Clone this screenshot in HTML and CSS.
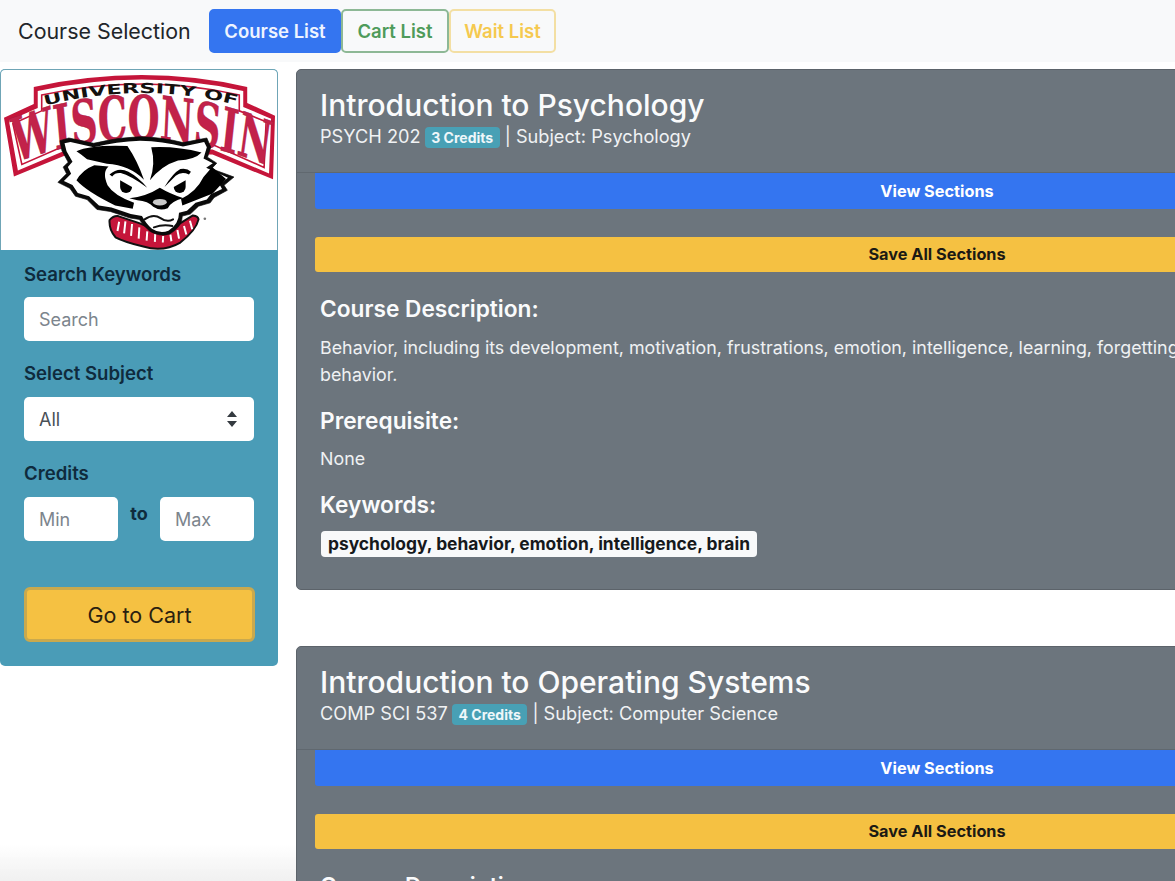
FILE: index.html
```html
<!DOCTYPE html>
<html lang="en">
<head>
<meta charset="utf-8">
<title>Course Selection</title>
<link rel="stylesheet" href="styles.css">
</head>
<body>
<nav class="navbar">
  <span class="brand">Course Selection</span>
  <div class="tabs">
    <button class="tab tab-blue">Course List</button>
    <button class="tab tab-green">Cart List</button>
    <button class="tab tab-yellow">Wait List</button>
  </div>
</nav>
<main class="layout">
  <aside class="sidebar">
    <svg class="logo" viewBox="0 -1 278 181" width="278" height="181" role="img" aria-label="University of Wisconsin logo">
      <path class="b-red" d="M3,47 L33,33 L33,16 Q143,-8 248,16 L248,32 L276,45 L274,109 L213,84 L67,84 L13,106 Z"/>
      <path class="b-white" d="M8,50 L37,37 L37,20 Q143,-3 244,20 L244,36 L272,48 L270,103 L213,79 L67,79 L17,100 Z"/>
      <path class="b-line" d="M12,53 L41,40 L41,24 Q143,2 240,24 L240,40 L267,51 L265,97 L213,74 L67,74 L21,94 Z"/>
      <path id="arcTop" class="guide" d="M44,35 Q143,9 240,35"/>
      <text class="univ"><textPath href="#arcTop" textLength="196" lengthAdjust="spacingAndGlyphs">UNIVERSITY OF</textPath></text>
      <g transform="scale(1,1.62)">
        <path id="arcWis" class="guide" d="M14,57 Q142,27 269,59"/>
        <text class="wis"><textPath href="#arcWis" textLength="258" lengthAdjust="spacingAndGlyphs">WISCONSIN</textPath></text>
      </g>
      <g transform="translate(50,60) scale(.3333)">
        <path class="scarf" d="M178,270 Q190,256 204,258 L270,280 L340,312 L430,256 Q446,258 447,268 Q440,300 392,338 Q340,368 280,350 Q220,335 196,322 Q176,300 178,270 Z"/>
        <path class="scarf-st" d="M207,275 L202,303 M226,274 L222,310 M246,282 L243,318 M268,292 L266,326 M292,304 L290,332 M316,312 L315,336 M340,318 L339,338 M362,314 L365,334 M383,300 L388,326 M403,288 L410,314 M421,272 L428,298"/>
        <path class="head-k" d="M28,30 L55,22 L130,38 Q200,20 270,18 Q340,20 400,36 L472,22 L484,50 L474,80 L502,98 L486,115 L554,140 L524,165 L534,180 L494,202 L482,218 L447,228 L422,252 L398,258 Q398,290 360,312 Q330,322 300,304 Q282,290 268,268 L240,264 L180,244 L140,238 L110,208 L75,198 L58,174 L22,156 L48,130 L38,110 L53,95 L34,60 Z"/>
        <path class="head-w" d="M42,38 L60,34 L130,50 Q200,32 270,30 Q340,32 400,48 L464,34 L472,50 L462,84 L490,98 L470,112 L536,142 L510,162 L518,176 L484,192 L472,208 L438,218 L412,242 L388,248 Q388,282 356,302 Q330,312 306,296 Q290,284 276,258 L242,252 L184,232 L146,226 L116,198 L82,188 L66,164 L40,152 L62,130 L52,110 L66,94 L48,62 Z"/>
        <path d="M78,62 Q120,42 232,46 Q262,90 282,148 Q240,105 170,100 L110,86 Q90,70 78,62 Z"/>
        <path d="M304,50 Q380,46 456,66 Q436,88 385,90 Q335,105 300,150 Q318,100 304,50 Z"/>
        <path d="M132,104 Q95,118 78,150 Q110,185 195,226 L248,236 L252,218 Q190,195 172,165 Q155,125 175,108 Z"/>
        <path d="M488,110 L530,146 L490,190 L398,226 L394,206 Q440,185 462,140 Z"/>
        <path d="M178,132 Q205,108 235,124 Q265,140 292,172 Q240,135 212,128 Q195,126 186,138 Z"/>
        <path d="M344,170 Q370,128 392,116 Q412,112 424,124 L418,132 Q395,122 378,136 Z"/>
        <path d="M210,150 L246,170 A18,18 0 0 1 210,170 Z"/>
        <path d="M408,150 L372,170 A18,18 0 0 0 408,170 Z"/>
        <path d="M238,204 Q290,198 330,172 Q360,190 402,204 Q365,212 354,234 Q330,244 310,230 Q295,212 262,210 Z"/>
        <ellipse class="nostril" cx="330" cy="216" rx="21" ry="10"/>
        <path class="mouth" d="M284,268 Q310,250 332,264 Q352,278 370,268 M312,292 Q340,282 368,288"/>
        <circle class="dot" cx="466" cy="266" r="4"/>
      </g>
    </svg>
    <form class="filters">
      <label class="field-label" for="search">Search Keywords</label>
      <input class="control" id="search" type="text" placeholder="Search">
      <label class="field-label gap-label" for="subject">Select Subject</label>
      <div class="select-box" id="subject">
        <span>All</span>
        <svg class="updown" viewBox="0 0 10 16" width="10" height="16" aria-hidden="true"><path d="M5,0 L10,6 L0,6 Z M0,10 L10,10 L5,16 Z"/></svg>
      </div>
      <label class="field-label gap-label" for="min">Credits</label>
      <div class="range">
        <input class="control" id="min" type="text" placeholder="Min">
        <b class="to">to</b>
        <input class="control" id="max" type="text" placeholder="Max">
      </div>
      <button class="cart-btn" type="button">Go to Cart</button>
    </form>
  </aside>
  <section class="courses">
    <article class="card">
      <header class="card-head">
        <h1>Introduction to Psychology</h1>
        <p class="sub">PSYCH 202 <span class="credits">3 Credits</span> | Subject: Psychology</p>
      </header>
      <div class="card-body">
        <button class="wide wide-blue">View Sections</button>
        <button class="wide wide-yellow">Save All Sections</button>
        <h2 class="first">Course Description:</h2>
        <p class="text">Behavior, including its development, motivation, frustrations, emotion, intelligence, learning, forgetting, personality, language, thinking, and social<br>behavior.</p>
        <h2>Prerequisite:</h2>
        <p class="text">None</p>
        <h2>Keywords:</h2>
        <span class="keywords">psychology, behavior, emotion, intelligence, brain</span>
      </div>
    </article>
    <article class="card">
      <header class="card-head">
        <h1>Introduction to Operating Systems</h1>
        <p class="sub">COMP SCI 537 <span class="credits">4 Credits</span> | Subject: Computer Science</p>
      </header>
      <div class="card-body">
        <button class="wide wide-blue">View Sections</button>
        <button class="wide wide-yellow">Save All Sections</button>
        <h2 class="first">Course Description:</h2>
        <p class="text">Input-output hardware, interrupt handling, properties of magnetic tapes, discs and drums, associative memories and virtual address translation techniques.</p>
      </div>
    </article>
  </section>
</main>
<div class="fade"></div>
</body>
</html>
```
FILE: styles.css
```css
* { box-sizing: border-box; }
html, body { height: 881px; overflow: hidden; }
body {
  margin: 0;
  background: #fff;
  color: #212529;
  font-family: Inter, "Noto Sans", sans-serif;
  width: 1175px;
}
button, input { font-family: inherit; }

.navbar {
  display: flex;
  align-items: center;
  height: 62px;
  padding: 0 0 0 18px;
  background: #f8f9fa;
}
.brand { font-size: 21.4px; width: 191px; white-space: nowrap; }
.tabs { display: flex; }
.tab {
  height: 44px;
  padding: 0;
  background: transparent;
  border: 2px solid;
  border-radius: 5px;
  font-size: 18.5px;
  font-weight: 600;
}
.tab-blue { width: 132px; background: #3475f0; border-color: #3475f0; color: #eef4ff; }
.tab-green { width: 108px; border-color: #8db895; color: #4f9b5a; }
.tab-yellow { width: 107px; border-color: #f3dfa3; color: #f5c94f; }

.layout {
  display: grid;
  grid-template-columns: 278px 1282px;
  column-gap: 18px;
  padding-top: 7px;
  align-items: start;
}
.sidebar {
  background: #4a9cb7;
  border-radius: 5px;
  overflow: hidden;
  height: 597px;
}
.logo { display: block; background: #fff; border: 1px solid #6fa5b6; border-bottom: 0; border-radius: 5px 5px 0 0; }
.b-red { fill: #c5153a; }
.b-white { fill: #fff; }
.b-line { fill: #fff; stroke: #c5153a; stroke-width: 1.6; }
.guide { fill: none; }
.univ { font: 700 14px "DejaVu Sans", sans-serif; fill: #14110f; }
.wis { font: 700 38px "DejaVu Serif", serif; fill: #c2224a; stroke: #a8183c; stroke-width: .3; }
.scarf { fill: #c5153a; stroke: #111; stroke-width: 6; stroke-linejoin: round; }
.scarf-st { fill: none; stroke: #fff; stroke-width: 6; }
.head-k { fill: #0a0a0a; stroke: #0a0a0a; stroke-width: 2; stroke-linejoin: round; }
.head-w { fill: #fff; }
.nostril { fill: #c9c9c9; }
.mouth { fill: none; stroke: #111; stroke-width: 6; stroke-linecap: round; }
.dot { fill: #777; }

.filters {
  display: flex;
  flex-direction: column;
  padding: 13px 24px 0;
}
.field-label {
  font-size: 18.6px;
  font-weight: 600;
  line-height: 22px;
  color: #0f2b3d;
  margin-bottom: 12px;
}
.gap-label { margin-top: 22px; line-height: 20px; margin-bottom: 14px; }
.control {
  display: block;
  width: 100%;
  height: 44px;
  padding: 0 15px;
  border: 0;
  border-radius: 5px;
  background: #fff;
  color: #495057;
  font-size: 18px;
}
.control::placeholder { color: #7c858d; opacity: 1; }
.select-box {
  display: flex;
  align-items: center;
  justify-content: space-between;
  height: 44px;
  padding: 0 17px 0 15px;
  border-radius: 5px;
  background: #fff;
  color: #495057;
  font-size: 18px;
}
.updown { fill: #343a40; }
.range {
  display: grid;
  grid-template-columns: 94px 1fr 94px;
  align-items: start;
}
.to {
  text-align: center;
  font-size: 18px;
  font-weight: 700;
  line-height: 22px;
  color: #0f2b3d;
  margin-top: 6px;
}
.cart-btn {
  height: 55px;
  margin-top: 46px;
  width: 231px;
  background: #f5c142;
  border: 3px solid #c9a94e;
  border-radius: 6px;
  color: #2a2010;
  font-size: 21.5px;
}

.courses { display: flex; flex-direction: column; gap: 56px; }
.card {
  background: #6c757d;
  border: 1px solid #5c636a;
  border-radius: 5px;
  color: #fff;
  width: 1282px;
  flex: none;
}
.card-head {
  height: 103px;
  padding: 16px 23px 0;
  border-bottom: 1px solid #60686f;
}
.card-head h1 {
  margin: 0;
  font-size: 30px;
  font-weight: 500;
  line-height: 38px;
  color: #fafbfc;
}
.sub {
  margin: 0;
  font-size: 18.2px;
  line-height: 24px;
  color: #f0f2f4;
}
.credits {
  display: inline-block;
  height: 21px;
  margin-left: -1px;
  padding: 0 6.5px;
  background: #48a0b5;
  border-radius: 4px;
  color: #eef7fa;
  font-size: 14px;
  font-weight: 700;
  line-height: 21px;
  vertical-align: 0;
}
.card-body { padding: 0 18px 32px; }
.wide {
  display: block;
  width: 1244px;
  height: 35.5px;
  padding: 0;
  border: 0;
  border-radius: 3px;
  font-size: 16.3px;
  font-weight: 700;
}
.wide-blue { background: #3475f0; color: #fff; border-radius: 0 0 3px 3px; }
.wide-yellow { background: #f5c142; color: #1c1a14; margin-top: 28px; }
.card-body h2 {
  margin: 20px 0 11px 5px;
  font-size: 22.7px;
  font-weight: 600;
  line-height: 26px;
  color: #fafbfc;
}
.card-body h2.first { margin-top: 24px; margin-bottom: 12px; }
.text {
  margin: 0 0 0 5px;
  font-size: 17.85px;
  line-height: 27px;
  color: #eff1f3;
}
.keywords {
  display: inline-block;
  height: 26px;
  margin: 2px 0 0 6px;
  padding: 0 7px;
  background: #f8f9fa;
  border-radius: 4px;
  color: #16191c;
  font-size: 17.4px;
  font-weight: 700;
  line-height: 26px;
}
.fade {
  position: fixed;
  left: 0;
  bottom: 0;
  width: 296px;
  height: 36px;
  background: linear-gradient(to bottom, rgba(240,240,240,0), rgba(240,240,240,1));
  pointer-events: none;
}
```
